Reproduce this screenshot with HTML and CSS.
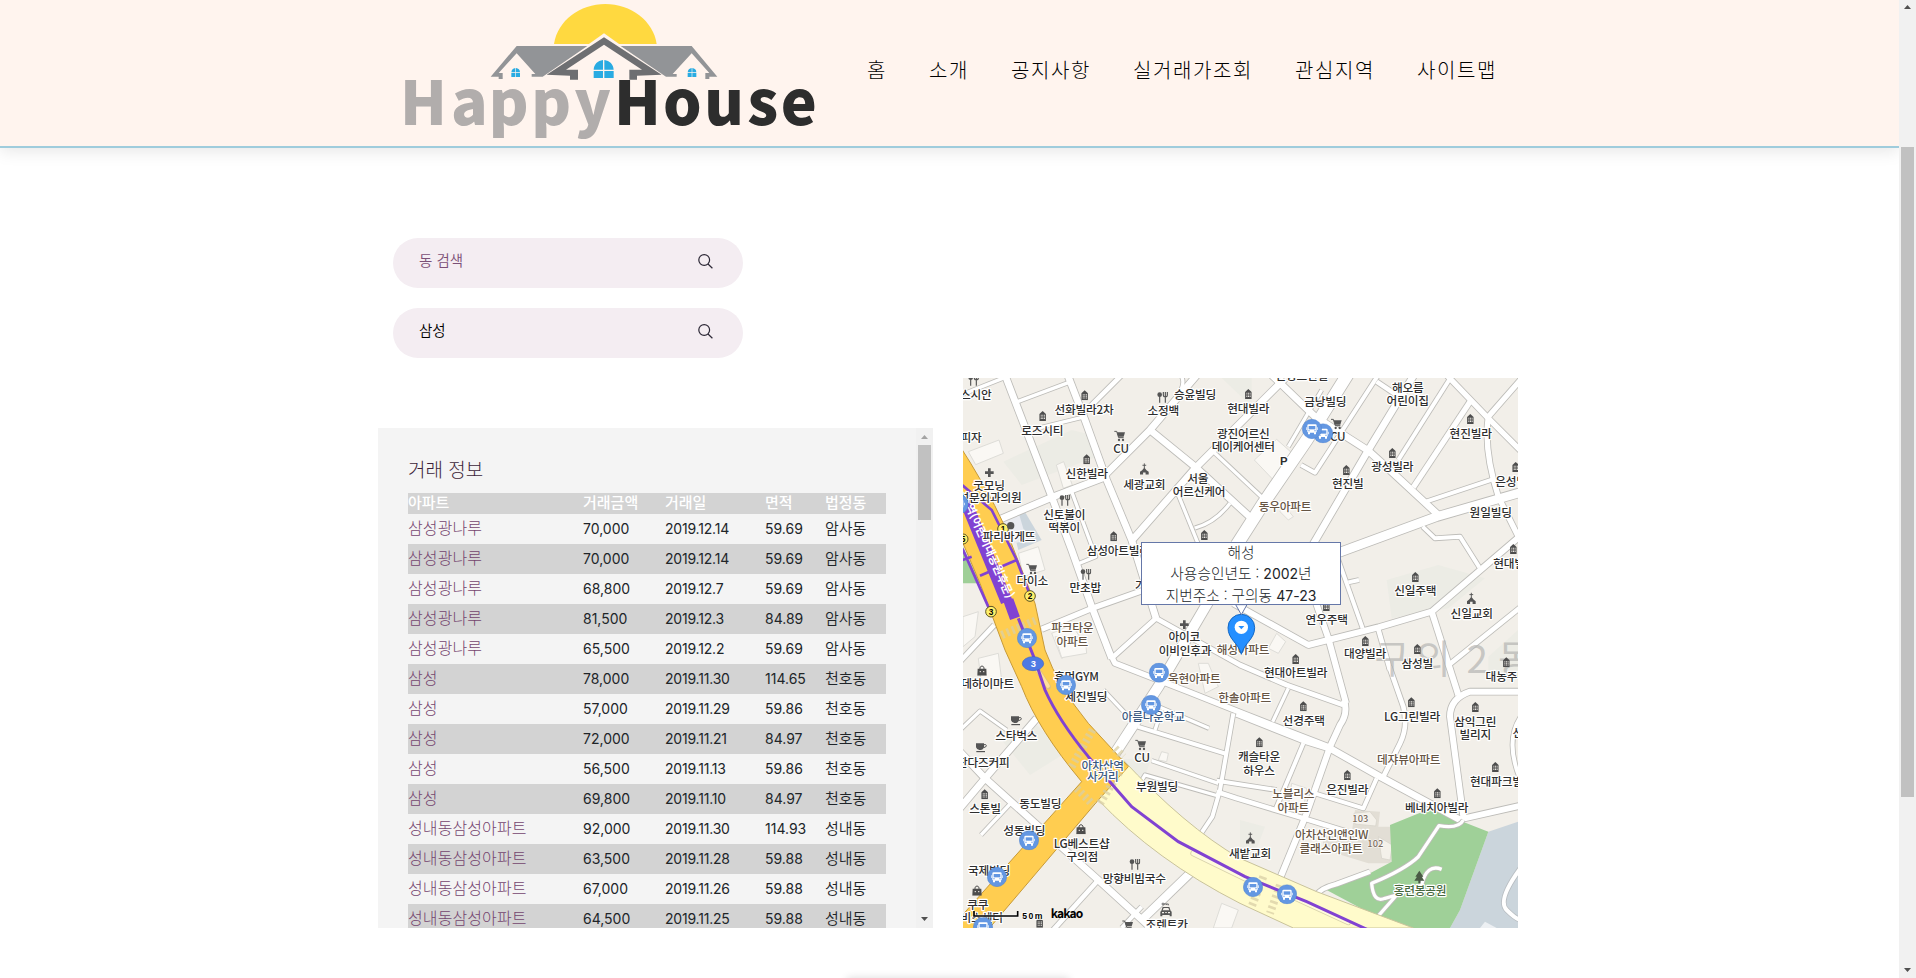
FILE: index.html
```html
<!DOCTYPE html>
<html lang="ko">
<head>
<meta charset="utf-8">
<title>HappyHouse</title>
<link rel="stylesheet" href="styles.css">
</head>
<body>
<div class="page">
  <header class="site-header">
    <svg class="logo" viewBox="0 0 1380 438" role="img" aria-label="HappyHouse">
      <path d="M522 132C532 62 600 12 676 12s144 50 154 120z" fill="#ffd940"/>
      <path d="M672 100 480 236h384z" fill="#fff4ee"/>
      <g fill="#929497">
        <path d="M410 138H622L488 230H455V222H466L410 160 356 219H368V237H356V230H332z"/>
        <path d="M935 138H722L858 230H890V222H878L935 160 988 219H976V237H988V230H1012z"/>
      </g>
      <path d="M672 112 500 224 570 227V239H594V209H558L672 134 786 209H748V239H771V227L845 224z" fill="#6e6f72"/>
      <g fill="#29abe2">
        <path d="M641 209c1-16 12-27 28-29v29zM673 180c16 2 27 13 28 29h-28zM641 213h28v21h-28zM673 213h28v21h-28z"/>
        <path d="M394 217c1-8 5-12 12-13v13zM408 204c7 1 12 5 12 13h-12zM394 219h12v12h-12zM408 219h12v12h-12z"/>
        <path d="M923 217c1-8 5-12 12-13v13zM937 204c7 1 12 5 12 13h-12zM923 219h12v12h-12zM937 219h12v12h-12z"/>
      </g>
      <g class="wordmark">
        <text class="word-happy" y="374" x="60 213 326 454 583">Happy</text>
        <text class="word-house" y="374" x="702 849 973 1102 1202">House</text>
      </g>
    </svg>
    <nav class="nav"><a>홈</a><a>소개</a><a>공지사항</a><a>실거래가조회</a><a>관심지역</a><a>사이트맵</a></nav>
  </header>

  <main class="container">
    <div class="searches">
      <label class="search"><span class="placeholder">동 검색</span>
        <svg class="search-icon" viewBox="0 0 15 15"><circle cx="6.2" cy="6" r="5.4"/><path d="M10 10l4.400 4.200"/></svg></label>
      <label class="search"><span>삼성</span>
        <svg class="search-icon" viewBox="0 0 15 15"><circle cx="6.2" cy="6" r="5.4"/><path d="M10 10l4.400 4.200"/></svg></label>
    </div>

    <div class="content">
      <section class="panel">
        <div class="panel-body">
          <h2>거래 정보</h2>
          <table>
            <colgroup><col class="c1"><col class="c2"><col class="c3"><col class="c4"><col></colgroup>
            <thead><tr><th>아파트</th><th>거래금액</th><th>거래일</th><th>면적</th><th>법정동</th></tr></thead>
            <tbody>
              <tr><td><a>삼성광나루</a></td><td>70,000</td><td>2019.12.14</td><td>59.69</td><td>암사동</td></tr>
              <tr><td><a>삼성광나루</a></td><td>70,000</td><td>2019.12.14</td><td>59.69</td><td>암사동</td></tr>
              <tr><td><a>삼성광나루</a></td><td>68,800</td><td>2019.12.7</td><td>59.69</td><td>암사동</td></tr>
              <tr><td><a>삼성광나루</a></td><td>81,500</td><td>2019.12.3</td><td>84.89</td><td>암사동</td></tr>
              <tr><td><a>삼성광나루</a></td><td>65,500</td><td>2019.12.2</td><td>59.69</td><td>암사동</td></tr>
              <tr><td><a>삼성</a></td><td>78,000</td><td>2019.11.30</td><td>114.65</td><td>천호동</td></tr>
              <tr><td><a>삼성</a></td><td>57,000</td><td>2019.11.29</td><td>59.86</td><td>천호동</td></tr>
              <tr><td><a>삼성</a></td><td>72,000</td><td>2019.11.21</td><td>84.97</td><td>천호동</td></tr>
              <tr><td><a>삼성</a></td><td>56,500</td><td>2019.11.13</td><td>59.86</td><td>천호동</td></tr>
              <tr><td><a>삼성</a></td><td>69,800</td><td>2019.11.10</td><td>84.97</td><td>천호동</td></tr>
              <tr><td><a>성내동삼성아파트</a></td><td>92,000</td><td>2019.11.30</td><td>114.93</td><td>성내동</td></tr>
              <tr><td><a>성내동삼성아파트</a></td><td>63,500</td><td>2019.11.28</td><td>59.88</td><td>성내동</td></tr>
              <tr><td><a>성내동삼성아파트</a></td><td>67,000</td><td>2019.11.26</td><td>59.88</td><td>성내동</td></tr>
              <tr><td><a>성내동삼성아파트</a></td><td>64,500</td><td>2019.11.25</td><td>59.88</td><td>성내동</td></tr>
            </tbody>
          </table>
        </div>
        <div class="scrollbar">
          <svg class="arrow dim" viewBox="0 0 17 17"><path d="M5 11h7L8.500 7z"/></svg>
          <div class="track"><div class="thumb panel-thumb"></div></div>
          <svg class="arrow" viewBox="0 0 17 17"><path d="M5 6h7L8.500 10z"/></svg>
        </div>
      </section>

      <section class="map">
        <svg class="map-canvas" viewBox="24 24 1665 1650">
          <defs>
            <g id="roads">
              <g>
                <path class="w20" d="M148 10 290 380 350 540 412 715 470 865"/>
                <path class="w20" d="M336 10 390 150 455 330 530 510 603 745"/>
                <path class="w20" d="M130 450 290 382 440 325 585 180 730 10"/>
                <path class="w14" d="M505 10 390 125"/>
                <path class="w20" d="M585 180 720 290 900 455"/>
                <path class="w20" d="M990 25 720 295 530 512"/>
                <path class="w10" d="M680 20Q692 45 665 80"/>
                <path class="w10" d="M775 245 935 395"/>
                <path class="w10" d="M668 370 745 560"/>
                <path class="w10" d="M720 474Q780 458 825 400"/>
                <path class="w10" d="M188 95 340 38"/>
                <path class="w10" d="M10 78 150 22"/>
                <path class="w10" d="M235 178 390 140"/>
                <path class="w10" d="M350 365 422 560 368 582"/>
                <path class="w16" d="M260 778 412 715 680 620"/>
                <path class="w14" d="M470 865 603 745 855 885 995 945 1165 1005"/>
                <path class="w16" d="M455 830 480 880 700 965 870 1033 1125 1132"/>
                <path class="w30" d="M775 670 610 950 480 1150"/>
                <path class="w14" d="M10 880 118 765"/>
              </g>
              <g transform="translate(855 0)">
                <path class="w36" d="M325 10 200 210 70 400-10 525"/>
                <path class="w12" d="M418 10 225 308 183 285"/>
                <path class="w10" d="M245 60 145 230"/>
                <path class="w20" d="M525 10 385 240 215 530"/>
                <path class="w20" d="M90 10 225 140 385 242 460 310 595 435"/>
                <path class="w14" d="M410 35 485 85"/>
                <path class="w16" d="M615 10 740 140 850 250"/>
                <path class="w12" d="M640 10 475 270"/>
                <path class="w16" d="M690 95 520 352"/>
                <path class="w16" d="M850 20 745 140Q730 240 775 380L840 510"/>
                <path class="w12" d="M558 395 758 328"/>
                <path class="w26" d="M850 365 770 388 590 440 290 550"/>
                <path class="w12" d="M548 470 585 505 660 500 718 592"/>
                <path class="w18" d="M850 490 575 725 415 772 205 825-20 700"/>
                <path class="w12" d="M295 570 368 775"/>
                <path class="w12" d="M325 637 357 630"/>
                <path class="w18" d="M225 690 265 805 318 1000"/>
                <path class="w14" d="M415 778 450 900"/>
                <path class="w18" d="M575 725 655 975"/>
                <path class="w14" d="M850 705 620 890"/>
              </g>
              <g transform="translate(855 840)">
                <path class="w18" d="M312 150Q325 190 300 225L270 290 200 490 118 690"/>
                <path class="w20" d="M-10 190 190 270 270 295 420 380 670 515"/>
                <path class="w10" d="M145 115 98 215"/>
                <path class="w12" d="M190 280 108 475"/>
                <path class="w14" d="M448 50 490 170Q505 230 480 280L430 380"/>
                <path class="w18" d="M850 125H690Q630 145 630 200L670 500"/>
                <path class="w18" d="M660 508 850 465"/>
                <path class="w12" d="M410 385 370 475 225 430"/>
                <path class="w14" d="M-70 425-10 445 190 505 370 560"/>
                <path class="w12" d="M-70 392 110 420"/>
                <path class="w12" d="M850 190Q785 270 850 410"/>
                <path class="w14" d="M230 735Q240 715 290 702L390 665"/>
              </g>
              <g transform="translate(0 840)">
                <path class="w10" d="M10 245 75 183 155 240"/>
                <path class="w20" d="M10 480 90 385 245 205"/>
                <path class="w20" d="M10 300 90 385 430 690 600 845"/>
                <path class="w10" d="M78 555 165 462"/>
                <path class="w14" d="M430 690 290 845"/>
                <path class="w24" d="M560 810 710 665"/>
                <path class="w12" d="M500 834 560 770"/>
                <path class="w12" d="M548 230 815 312"/>
                <path class="w10" d="M615 172 762 235M620 180 600 240"/>
                <path class="w10" d="M590 332 790 400"/>
                <path class="w10" d="M555 400 570 375 790 438"/>
                <path class="w12" d="M835 190 795 420 772 500 735 555"/>
                <path class="w10" d="M445 120 525 205"/>
              </g>
            </g>
            <g id="park-path"><path class="w10" d="M1525 1350Q1510 1378 1452 1367L1390 1460Q1350 1498 1250 1540 1255 1600 1290 1585L1325 1575M1268 1640 1325 1575 1400 1545Q1415 1480 1460 1498"/></g>

            <symbol id="bldg" viewBox="0 0 24 32"><path d="M2 32V10L12 1l10 9v22z" fill="#4d4d4d"/><path d="M6 13h3v3H6zM11 13h3v3h-3zM16 13h3v3h-3zM6 18h3v3H6zM11 18h3v3h-3zM16 18h3v3h-3zM6 23h3v3H6zM11 23h3v3h-3zM16 23h3v3h-3z" fill="#f2efe9"/></symbol>
            <symbol id="cart" viewBox="0 0 34 34"><path d="M1 3h7l6 19h15" fill="none" stroke="#555" stroke-width="3"/><path d="M9 6h24l-4 13H13z" fill="#555"/><circle cx="15" cy="29" r="3.500" fill="#555"/><circle cx="27" cy="29" r="3.500" fill="#555"/></symbol>
            <symbol id="food" viewBox="0 0 34 34"><circle cx="9" cy="9" r="7" fill="#555"/><path d="M9 9v24M26 14v19M20 1v10q0 5 6 5t6-5V1M26 1v13" fill="none" stroke="#555" stroke-width="3.500"/></symbol>
            <symbol id="church" viewBox="0 0 30 36"><path d="M15 0v15M9 6h12" stroke="#555" stroke-width="3"/><path d="M8 22l7-9 7 9 7 5v9H19v-7h-8v7H1v-9z" fill="#555"/></symbol>
            <symbol id="cross" viewBox="0 0 28 28"><path d="M14 1v26M1 14h26" stroke="#555" stroke-width="8"/></symbol>
            <symbol id="cup" viewBox="0 0 34 30"><path d="M1 2h24v12q-3 8-9 8h-5Q3 20 1 14zM2 25h26v4H2z" fill="#555"/><path d="M24 6q8-2 8 3t-9 6" fill="none" stroke="#555" stroke-width="3"/></symbol>
            <symbol id="bag" viewBox="0 0 30 32"><path d="M2 11h26l1 21H1z" fill="#4d4d4d"/><path d="M9 14V7q6-9 12 0v7" fill="none" stroke="#4d4d4d" stroke-width="3"/><path d="M8 20h4M18 20h4" stroke="#f2efe9" stroke-width="3"/></symbol>
            <symbol id="rental" viewBox="0 0 36 44"><circle cx="9" cy="5" r="3" fill="none" stroke="#555" stroke-width="2.500"/><path d="M12 5h13v4M20 5v3" fill="none" stroke="#555" stroke-width="2.500"/><path d="M8 14h20l4 11 3 3v14h-6v-4H7v4H1V28l3-3z" fill="#555"/><path d="M11 17h14l3 7H8zM6 29h6v4H6zM24 29h6v4h-6zM15 30h6v2h-6z" fill="#f2efe9"/></symbol>
            <symbol id="bus" viewBox="0 0 60 60"><circle cx="30" cy="30" r="29" fill="#6397e2" stroke="#4f83cf" stroke-width="1.500"/><rect x="16" y="16" width="28" height="25" rx="4" fill="#fff"/><rect x="20" y="21" width="20" height="10" fill="#6397e2"/><path d="M18 40h6v6h-6zM36 40h6v6h-6zM12 25h2v8h-2zM46 25h2v8h-2z" fill="#fff"/><path d="M19 34h4v3h-4zM37 34h4v3h-4z" fill="#6397e2"/></symbol>
          </defs>

          <rect x="24" y="24" width="1665" height="1650" fill="#f2efe9"/>

          <!-- blocks and building footprints -->
          <g fill="#ecece5">
            <path d="M145 275 350 180 390 190 425 260 200 345zM800 24H890V110zM1295 630 1450 585 1590 625 1480 715 1310 745zM140 1110 240 1060 330 1150 225 1215zM1600 860 1689 780V930H1600zM490 1170 590 1160 570 1220 540 1240zM855 1350 930 1370 900 1450 855 1460z"/>
          </g>
          <g fill="#faf8f4" stroke="#deddd8" stroke-width="3">
            <path d="M40 245 132 210 145 250 62 284z"/><path d="M304 285 326 275 352 345 325 355z"/><path d="M898 270 965 208 1012 250 970 300 980 318 960 335z"/>
            <path d="M190 550 250 530 270 600 205 620z"/><path d="M290 790 350 765 395 830 320 865z"/><path d="M965 790 992 815 970 850 940 835z"/><path d="M24 740 70 725 60 800 24 830zM70 865 130 850 140 930 80 945z"/>
            <path d="M990 410 1015 440 1000 450 975 425z"/><path d="M300 800 390 800 395 850 320 863zM620 1145 640 1150 635 1175 610 1170z"/><path d="M1010 1240 1055 1255 1045 1320 1000 1310z"/><path d="M800 1600 850 1620 830 1674H775z"/><path d="M730 880 760 880 790 950 750 970z"/>
          </g>
          <path d="M205 418 260 510 190 540 165 440z" fill="#cbd5dc"/><path d="M140 440 190 425 215 510 160 525z" fill="#e9ebf0"/>
          <path d="M24 530 75 640H24z" fill="#9fcf97"/>
          <path d="M1200 1320 1275 1325 1270 1370 1310 1370 1310 1480 1240 1480 1110 1440 1100 1400 1190 1390z" fill="#e2ded5"/>
          <path d="M1197 1330 1245 1325 1265 1350 1262 1368 1200 1362zM1270 1400 1312 1425 1305 1470 1280 1465z" fill="#f4f1ea" stroke="#d5d2c8" stroke-width="2"/>
          <path d="M1689 1355 1600 1385 1515 1620 1485 1674H1689z" fill="#cbd5dc"/>
          <path d="M1440 1310 1305 1365 1310 1475 1245 1510 1105 1555 1265 1640 1375 1674H1485L1515 1620 1600 1385 1510 1350z" fill="#9fd098"/>
          <path d="M1590 1655 1625 1674H1575z" fill="#edf0f3"/>

          <use href="#roads" class="casing"/>
          <use href="#roads" class="surface"/>
          <use href="#park-path" class="casing"/>
          <use href="#park-path" class="surface"/>
          <path d="M1700 1490Q1625 1590 1655 1620T1700 1650" fill="none" stroke="#b9bec2" stroke-width="17"/>
          <path d="M1700 1490Q1625 1590 1655 1620T1700 1650" fill="none" stroke="#fff" stroke-width="12"/>

          <!-- arterial roads -->
          <path d="M430 1290Q600 1470 855 1600L1015 1674H1375L1085 1565 855 1465Q690 1370 500 1165z" fill="#fffbcb" stroke="#c9c39b" stroke-width="3"/>
          <path d="M0 205Q100 360 145 460L240 700 270 840Q310 950 400 1060L520 1190 430 1290 90 1690H0V1660L380 1235Q250 1080 200 950L150 840 75 640 24 520 0 480z" fill="#ffcd50" stroke="#c79a38" stroke-width="3"/>
          <path d="M245 895 280 950" stroke="#e0c37a" stroke-width="16" stroke-linecap="round"/><path d="M246 897 279 948" stroke="#ffe09a" stroke-width="11" stroke-linecap="round"/>
          <path d="M715 1450 880 1530" stroke="#d8d2aa" stroke-width="18" stroke-linecap="round"/><path d="M715 1450 880 1530" stroke="#fffbdc" stroke-width="13" stroke-linecap="round"/>
          <path d="M1020 1585 1180 1658" stroke="#d8d2aa" stroke-width="15" stroke-linecap="round"/><path d="M1020 1585 1180 1658" stroke="#fffbdc" stroke-width="10" stroke-linecap="round"/>
          <g class="crosswalk">
            <path d="M140 795 245 750"/><path d="M350 1190 415 1075"/><path d="M365 1255 415 1305"/><path d="M435 1300 500 1195"/><path d="M925 1520 890 1610M975 1545 945 1630"/><path d="M480 1135 505 1160"/>
          </g>

          <!-- subway line -->
          <g fill="none" stroke="#8142d2">
            <path d="M190 745 240 870 270 960Q310 1050 400 1160L460 1230 530 1310 670 1415 870 1520 1055 1595 1240 1680" stroke-width="9"/>
            <path d="M10 335 110 420 185 570 225 675M10 545 24 540 105 722M75 617 185 570M10 575 50 560" stroke-width="8"/>
            <path d="M24 375 155 695" stroke-width="36"/>
            <path d="M160 690 180 745" stroke-width="31"/>
          </g>
          <text class="station" transform="translate(31 408) rotate(66)" textLength="306" lengthAdjust="spacingAndGlyphs">역(어린이대공원후문)</text>

          <text class="district" x="1312 1434 1567 1682" y="908">구의2동</text>

          <g class="exits">
            <circle cx="144" cy="477" r="16"/><circle cx="225" cy="678" r="16"/><circle cx="108" cy="725" r="16"/><circle cx="24" cy="507" r="15"/>
            <text x="144" y="486">1</text><text x="225" y="687">2</text><text x="108" y="734">3</text><text x="24" y="516">5</text>
          </g>

          <!-- pictograms -->
          <g>
            <use href="#food" x="38" y="14" width="34" height="34"/><use href="#bldg" x="377" y="60" width="24" height="31"/><use href="#bldg" x="251" y="122" width="24" height="31"/>
            <use href="#food" x="605" y="65" width="34" height="34"/><use href="#cart" x="477" y="181" width="34" height="34"/><use href="#bldg" x="383" y="252" width="24" height="31"/>
            <use href="#church" x="554" y="279" width="28" height="36"/><use href="#cross" x="89" y="294" width="28" height="28"/><use href="#food" x="312" y="374" width="34" height="34"/>
            <use href="#bldg" x="464" y="483" width="24" height="31"/><use href="#bldg" x="736" y="479" width="24" height="31"/><use href="#cart" x="213" y="580" width="34" height="34"/>
            <use href="#food" x="375" y="596" width="34" height="34"/><use href="#cross" x="674" y="750" width="28" height="28"/><circle cx="167" cy="467" r="11" fill="#555"/>
            <use href="#bldg" x="868" y="56" width="24" height="31"/><use href="#cart" x="1127" y="145" width="34" height="34"/><use href="#bldg" x="1534" y="131" width="24" height="31"/>
            <use href="#bldg" x="1300" y="233" width="24" height="31"/><use href="#bldg" x="1162" y="284" width="24" height="31"/><use href="#bldg" x="1670" y="275" width="24" height="31"/>
            <use href="#bldg" x="1369" y="605" width="24" height="31"/><use href="#church" x="1535" y="667" width="28" height="36"/><use href="#bldg" x="1663" y="521" width="24" height="31"/>
            <use href="#bldg" x="1102" y="692" width="24" height="31"/><use href="#bldg" x="1219" y="797" width="24" height="31"/><use href="#bldg" x="1375" y="821" width="24" height="31"/>
            <use href="#bldg" x="1010" y="851" width="24" height="31"/><use href="#bldg" x="1642" y="861" width="24" height="31"/><use href="#bldg" x="1033" y="993" width="24" height="31"/>
            <use href="#bldg" x="1357" y="981" width="24" height="31"/><use href="#bldg" x="1549" y="995" width="24" height="31"/><use href="#bldg" x="901" y="1101" width="24" height="31"/>
            <use href="#bldg" x="1165" y="1199" width="24" height="31"/><use href="#bldg" x="1609" y="1175" width="24" height="31"/><use href="#bldg" x="1435" y="1254" width="24" height="31"/>
            <use href="#church" x="872" y="1386" width="28" height="36"/><path d="M1393 1502 1405 1520H1400L1408 1532H1396V1540H1390V1532H1378L1386 1520H1381z" fill="#4a5a45"/>
            <use href="#bag" x="66" y="885" width="30" height="32"/><use href="#cup" x="167" y="1037" width="34" height="30"/><use href="#cup" x="62" y="1118" width="34" height="30"/>
            <use href="#cart" x="540" y="1108" width="34" height="34"/><use href="#bldg" x="77" y="1257" width="24" height="31"/><use href="#bag" x="363" y="1361" width="30" height="32"/>
            <use href="#food" x="522" y="1466" width="34" height="34"/><use href="#bag" x="51" y="1545" width="30" height="32"/><use href="#cart" x="501" y="1650" width="34" height="34"/><use href="#bldg" x="242" y="1642" width="24" height="31"/>
            <use href="#rental" x="615" y="1597" width="36" height="44"/>
          </g>

          <g class="labels">
            <text x="62" y="86">스시안</text><text x="387" y="131">선화빌라2차</text><text x="262" y="194">로즈시티</text><text x="720" y="86">승윤빌딩</text><text x="625" y="136">소정백</text><text x="48" y="217">피자</text>
            <text x="498" y="248">CU</text><text x="880" y="128">현대빌라</text><text x="865" y="203">광진어르신</text><text x="865" y="243">데이케어센터</text><text x="395" y="323">신한빌라</text><text x="568" y="356">세광교회</text>
            <text x="728" y="338">서울</text><text x="732" y="377">어르신케어</text><text x="102" y="359">굿모닝</text><text x="105" y="397">성문외과의원</text><text x="328" y="446">신토불이</text><text x="328" y="485">떡볶이</text>
            <text x="162" y="514">파리바게뜨</text><text x="490" y="554">삼성아트빌라</text><text x="232" y="646">다이소</text><text x="391" y="667">만초밥</text><text x="556" y="660">가</text><text x="688" y="813">아이코</text><text x="690" y="854">이비인후과</text>
            <text x="1040" y="30">신청그린빌</text><text x="1111" y="107">금낭빌딩</text><text x="1358" y="66">해오름</text><text x="1358" y="106">어린이집</text><text x="1148" y="212">CU</text><text x="1547" y="203">현진빌라</text><text x="1312" y="304">광성빌라</text><text x="1178" y="355">현진빌</text>
            <text x="1684" y="347">은성빌라</text><text x="1607" y="440">원일빌딩</text><text x="1381" y="676">신일주택</text><text x="1550" y="743">신일교회</text><text x="1678" y="593">현대빌라</text><text x="1115" y="763">연우주택</text><text x="1230" y="865">대양빌라</text><text x="1387" y="893">삼성빌</text>
            <text x="1022" y="922">현대아트빌라</text><text x="1655" y="932">대농주택</text><text x="1046" y="1064">선경주택</text><text x="1371" y="1052">LG그린빌라</text><text x="1561" y="1067">삼익그린</text><text x="1561" y="1108">빌리지</text><text x="1704" y="1100">선빌</text>
            <text x="912" y="1172">캐슬타운</text><text x="912" y="1214">하우스</text><text x="1177" y="1272">은진빌라</text><text x="1640" y="1247">현대파크빌라</text><text x="1445" y="1326">베네치아빌라</text><text x="885" y="1463">새밭교회</text>
            <text x="98" y="955">데하이마트</text><text x="364" y="932">휴먼GYM</text><text x="394" y="992">세진빌딩</text><text x="184" y="1109">스타벅스</text><text x="85" y="1190">잔다즈커피</text><text x="561" y="1176">CU</text><text x="606" y="1262">부원빌딩</text>
            <text x="90" y="1328">스톤빌</text><text x="256" y="1313">동도빌딩</text><text x="208" y="1395">성동빌딩</text><text x="380" y="1433">LG베스트샵</text><text x="382" y="1472">구의점</text><text x="538" y="1538">망향비빔국수</text><text x="102" y="1514">국제빌딩</text><text x="68" y="1616">쿠쿠</text><text x="80" y="1655">비스센터</text><text x="635" y="1677">조렌트카</text>
            <g class="apartment"><text x="352" y="785">파크타운</text><text x="352" y="827">아파트</text><text x="990" y="424">동우아파트</text><text x="864" y="852">해성아파트</text><text x="718" y="939">욱현아파트</text><text x="869" y="996">한솔아파트</text><text x="1361" y="1183">데쟈뷰아파트</text><text x="1015" y="1285">노블리스</text><text x="1015" y="1326">아파트</text><text x="1130" y="1408">아차산인앤인W</text><text x="1128" y="1450">클래스아파트</text></g>
            <g class="school"><text x="595" y="1054">아름다운학교</text><text x="443" y="1199">아차산역</text><text x="443" y="1233">사거리</text></g>
            <g class="number"><text x="1216" y="1356">103</text><text x="1261" y="1431">102</text></g>
            <text class="park" x="1395" y="1576">홍련봉공원</text>
            <text class="parking" x="986" y="284">P</text>
          </g>

          <ellipse cx="234" cy="881" rx="32" ry="21" fill="#4e7ae4" stroke="#3a63cb" stroke-width="2"/><text class="route" x="235" y="891">3</text>
          <g>
            <use href="#bus" x="-19" y="373" width="60" height="60"/><use href="#bus" x="186" y="774" width="60" height="60"/><use href="#bus" x="1074" y="160" width="60" height="60"/><use href="#bus" x="1041" y="147" width="60" height="60"/>
            <use href="#bus" x="303" y="915" width="60" height="60"/><use href="#bus" x="582" y="878" width="60" height="60"/><use href="#bus" x="558" y="975" width="60" height="60"/><use href="#bus" x="192" y="1381" width="60" height="60"/>
            <use href="#bus" x="96" y="1491" width="60" height="60"/><use href="#bus" x="54" y="1641" width="60" height="60"/><use href="#bus" x="864" y="1521" width="60" height="60"/><use href="#bus" x="966" y="1543" width="60" height="60"/>
          </g>

          <!-- scale and attribution -->
          <path d="M57 1623V1638H188V1623" fill="none" stroke="#fff" stroke-width="9" opacity=".7"/>
          <path d="M57 1623V1638H188V1623" fill="none" stroke="#000" stroke-width="5"/>
          <text class="scale" x="202" y="1648" textLength="60">50m</text>
          <text class="kakao" x="287" y="1645" textLength="98">kakao</text>

          <!-- selected place marker -->
          <path d="M859 853C850 818 819 808 819 773a40 40 0 0 1 80 0c0 35-31 45-40 80z" fill="#258fff" stroke="#1267c4" stroke-width="3"/>
          <circle cx="859" cy="772" r="20" fill="#fff"/><path d="M850 768h18l-9 10z" fill="#258fff"/>
          <path d="M842 704 859 734 876 704z" fill="#fff" stroke="#6577a8" stroke-width="3"/>
        </svg>
        <div class="info-window"><p>해성</p><p>사용승인년도 : <span>2002</span>년</p><p>지번주소 : 구의동 <span>47-23</span></p></div>
      </section>
    </div>
  </main>
  <div class="next-card"></div>
</div>
<div class="scrollbar page-scrollbar">
  <svg class="arrow" viewBox="0 0 17 17"><path d="M5 9h7L8.500 5z"/></svg>
  <div class="track page-track"><div class="thumb page-thumb"></div></div>
  <svg class="arrow" viewBox="0 0 17 17"><path d="M5 7h7L8.500 11z"/></svg>
</div>
</body>
</html>
```
FILE: styles.css
```css
* { box-sizing: border-box; }
body {
  margin: 0;
  height: 978px;
  display: flex;
  overflow: hidden;
  background: #fff;
  color: #212529;
  font: 300 15px/1.4 "Noto Sans CJK KR", sans-serif;
}
p, h2 { margin: 0; }
.page { width: 1899px; height: 978px; overflow: hidden; }

.site-header {
  height: 148px;
  padding-left: 380px;
  display: flex;
  background: #fff4ee;
  border-bottom: 2px solid #9fccdc;
  box-shadow: 0 3px 16px rgba(0, 0, 0, .1);
}
.logo { width: 460px; height: 146px; flex: none; }
.wordmark { font-weight: 900; font-size: 182px; }
.word-happy { fill: #b1adac; }
.word-house { fill: #2d2d2d; }
.nav { display: flex; gap: 42px; padding: 55px 0 0 27px; font-size: 20px; letter-spacing: 1.6px; line-height: 30px; color: #000; }

.container { width: 1140px; margin-left: 378px; padding-top: 90px; }
.searches { display: flex; flex-direction: column; gap: 20px; padding-left: 15px; }
.search {
  width: 350px; height: 50px; border-radius: 25px;
  padding: 0 30px 5px 26px;
  display: flex; align-items: center; justify-content: space-between;
  background: #f4edf2; color: #000; font-size: 14.5px; font-weight: 350;
}
.placeholder { color: #7b4f76; }
.search-icon { width: 15px; height: 15px; margin-top: 2px; fill: none; stroke: #2b2735; stroke-width: 1.2; }

.content { display: flex; gap: 30px; align-items: flex-end; margin-top: 20px; }
.panel { width: 555px; height: 500px; display: flex; overflow: hidden; background: #f4f4f4; }
.panel-body { width: 538px; padding: 28px 30px 0; }
h2 { font-size: 19px; font-weight: 300; line-height: 25px; margin-bottom: 12px; color: #3c1f3a; }
table { width: 478px; table-layout: fixed; border-collapse: collapse; }
.c1 { width: 175px; }
.c2 { width: 82px; }
.c3 { width: 100px; }
.c4 { width: 60px; }
th, td { padding: 0; text-align: left; white-space: nowrap; line-height: 20px; }
th { height: 21px; background: #d3d3d3; color: #fff; font-weight: 500; vertical-align: top; line-height: 17px; }
td { height: 30px; font-family: Inter, "Noto Sans CJK KR", sans-serif; font-weight: 400; font-size: 14px; }
td:nth-child(3) { letter-spacing: -.2px; }
td:last-child { font: 350 15px/20px "Noto Sans CJK KR", sans-serif; padding-bottom: 2px; }
td:first-child { padding-bottom: 2px; }
td a { font: 300 16px/20px "Noto Sans CJK KR", sans-serif; color: #74456e; letter-spacing: .1px; }
tbody tr:nth-child(even) { background: #d3d3d3; }

.scrollbar { width: 17px; display: flex; flex-direction: column; background: #f1f1f1; flex: none; }
.arrow { width: 17px; height: 17px; fill: #505050; }
.dim { fill: #a3a3a3; }
.track { flex: 1; padding: 0 2px; }
.thumb { background: #c1c1c1; }
.panel-thumb { height: 75px; }
.page-scrollbar { height: 978px; }
.page-track { padding-top: 130px; }
.page-thumb { height: 650px; }

.map { position: relative; width: 555px; height: 550px; overflow: hidden; }
.map-canvas { display: block; width: 555px; height: 550px; }
.casing { --extra: 5px; stroke: #bdbcb8; }
.surface { --extra: 0px; stroke: #fff; }
#roads path, #park-path path { fill: none; stroke-linejoin: round; stroke-width: calc(var(--w) + var(--extra)); }
.w10 { --w: 10px; } .w12 { --w: 12px; } .w14 { --w: 14px; } .w16 { --w: 16px; } .w18 { --w: 18px; }
.w20 { --w: 20px; } .w24 { --w: 24px; } .w26 { --w: 26px; } .w30 { --w: 30px; } .w36 { --w: 36px; }
.crosswalk { fill: none; stroke: #d9cfa6; stroke-width: 24px; stroke-dasharray: 8px 9px; opacity: .75; }
.station { fill: #fff; font-size: 35px; font-weight: 700; }
.district { fill: #b4b4b2; fill-opacity: .7; font-size: 116px; font-weight: 400; text-anchor: middle; }
.exits { font: 700 25px "Liberation Sans", sans-serif; text-anchor: middle; }
.exits circle { fill: #fff06a; stroke: #5b5424; stroke-width: 3px; }
.labels { font-size: 35px; font-weight: 500; text-anchor: middle; fill: #2e2e2e; stroke: #fff; stroke-width: 7px; stroke-linejoin: round; paint-order: stroke; letter-spacing: -.6px; }
.apartment { fill: #665544; }
.school { fill: #3c5a82; }
.number { fill: #7b6c5c; font-size: 28px; stroke-width: 3px; letter-spacing: 0; }
.park { fill: #47693f; }
.parking { font: 700 34px "Liberation Sans", sans-serif; }
.route { font: 700 28px "Liberation Sans", sans-serif; fill: #fff; text-anchor: middle; }
.scale { font: 700 26px "Liberation Sans", sans-serif; stroke: #fff; stroke-width: 4px; paint-order: stroke; }
.kakao { font: 700 36px "Noto Sans CJK KR", sans-serif; }
.info-window {
  position: absolute; left: 178px; top: 164px; width: 200px; height: 63px;
  border: 1px solid #6577a8; background: #fff; text-align: center; line-height: 21px;
}
.info-window p { position: relative; top: -2px; font-size: 14.700px; }
.info-window span { font-family: Inter, sans-serif; font-size: 14px; font-weight: 400; }
.next-card { width: 222px; height: 60px; margin: 50px 0 0 847px; box-shadow: 0 0 8px rgba(0, 0, 0, .14); }
```
